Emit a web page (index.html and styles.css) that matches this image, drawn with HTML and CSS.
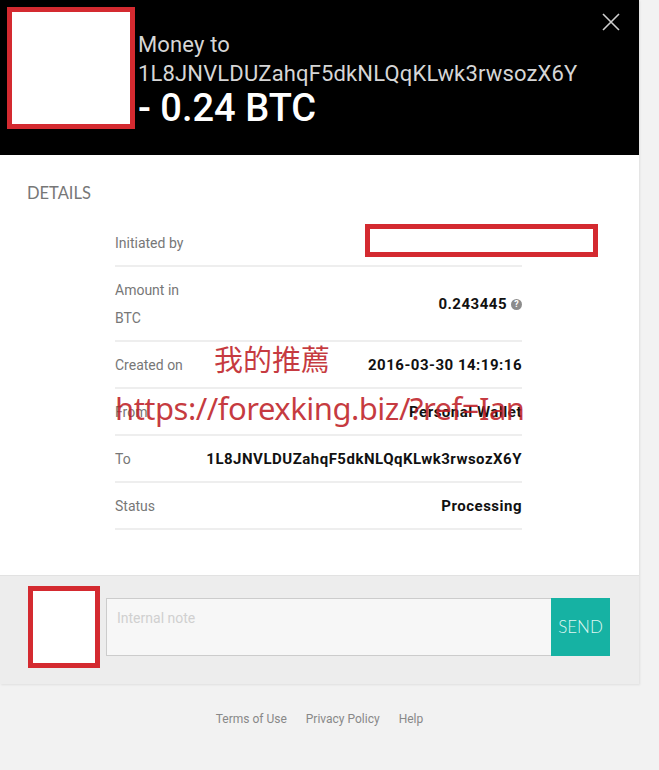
FILE: index.html
```html
<!DOCTYPE html>
<html>

<head lang="en">
    <meta charset="UTF-8">
    <title>Transaction details</title>
    <link rel="stylesheet" href="styles.css">
</head>

<body>
    <div class="modal">
        <div class="modal-head">
            <div class="avatar"></div>
            <div class="title">
                <div class="title-sub">Money to</div>
                <div class="title-sub">1L8JNVLDUZahqF5dkNLQqKLwk3rwsozX6Y</div>
                <div class="title-amount">- 0.24 BTC</div>
            </div>
            <a href="#" class="close">
                <svg width="18" height="18" viewBox="0 0 18 18">
                    <path d="M1 1 L17 17 M17 1 L1 17" stroke="#cfcfcf" stroke-width="1.6" fill="none"/>
                </svg>
            </a>
        </div>

        <div class="modal-body">
            <h3 class="section-title">DETAILS</h3>
            <div class="details">
                <div class="row">
                    <span class="label">Initiated by</span>
                    <span class="value"></span>
                </div>
                <div class="row">
                    <span class="label">Amount in BTC</span>
                    <span class="value">0.243445<i class="help">?</i></span>
                </div>
                <div class="row">
                    <span class="label">Created on</span>
                    <span class="value">2016-03-30 14:19:16</span>
                </div>
                <div class="row">
                    <span class="label">From</span>
                    <span class="value">Personal Wallet</span>
                </div>
                <div class="row">
                    <span class="label">To</span>
                    <span class="value">1L8JNVLDUZahqF5dkNLQqKLwk3rwsozX6Y</span>
                </div>
                <div class="row">
                    <span class="label">Status</span>
                    <span class="value">Processing</span>
                </div>

                <!-- 标注层 -->
                <div class="mark mark-initiator"></div>
                <div class="watermark wm-cn">我的推薦</div>
                <div class="watermark wm-url">https://forexking.biz/?ref=Ian</div>
            </div>
        </div>

        <div class="note-bar">
            <div class="note-avatar"></div>
            <textarea class="note-input" placeholder="Internal note"></textarea>
            <button class="send">SEND</button>
        </div>
    </div>

    <div class="footer">
        <a href="#">Terms of Use</a>
        <a href="#">Privacy Policy</a>
        <a href="#">Help</a>
    </div>
</body>

</html>
```

FILE: styles.css
```css
* {
    margin: 0;
    padding: 0;
    box-sizing: border-box;
}

body {
    background-color: #f2f2f2;
    font-family: Roboto, "Liberation Sans", sans-serif;
}

.modal {
    width: 639px;
    background: #fff;
    box-shadow: 1px 1px 2px rgba(0, 0, 0, .08);
}

/* 头部 */
.modal-head {
    position: relative;
    height: 155px;
    background: #000;
    padding: 7px;
    display: flex;
    align-items: flex-start;
}

.avatar {
    width: 128px;
    height: 122px;
    background: #fff;
    border: 5px solid #d42a30;
    flex-shrink: 0;
}

.title {
    margin-left: 3px;
    margin-top: 23px;
}

.title-sub {
    color: #d6d6d6;
    font-size: 22px;
    line-height: 29px;
    letter-spacing: 0.15px;
}

.title-amount {
    color: #fff;
    font-size: 38px;
    font-weight: 500;
    line-height: 41px;
}

.close {
    position: absolute;
    top: 13px;
    right: 19px;
}

/* 详情 */
.modal-body {
    padding: 28px 0 45px;
}

.section-title {
    margin-left: 27px;
    font-family: Lato, sans-serif;
    font-size: 16.5px;
    font-weight: normal;
    line-height: 20px;
    color: #777;
}

.details {
    position: relative;
    width: 407px;
    margin: 17px 0 0 115px;
}

.row {
    display: flex;
    justify-content: space-between;
    align-items: center;
    padding: 9px 0 8px;
    border-bottom: 2px solid #eee;
}

.label {
    width: 80px;
    font-size: 14px;
    line-height: 28px;
    color: #777;
}

.value {
    font-size: 15px;
    font-weight: bold;
    color: #111;
    letter-spacing: 0.5px;
    display: flex;
    align-items: center;
}

.help {
    display: inline-block;
    width: 11px;
    height: 11px;
    margin-left: 4px;
    border-radius: 50%;
    background: #8c8c8c;
    color: #fff;
    font-size: 9px;
    font-style: normal;
    line-height: 11px;
    text-align: center;
    letter-spacing: 0;
}

.mark {
    position: absolute;
    background: #fff;
    border: 5px solid #d42a30;
}

.mark-initiator {
    left: 250px;
    top: 4px;
    width: 233px;
    height: 33px;
}

.watermark {
    position: absolute;
    color: rgba(190, 30, 38, .88);
    white-space: nowrap;
}

.wm-cn {
    left: 99px;
    top: 120px;
    font-family: "Noto Sans CJK TC", sans-serif;
    font-size: 29px;
    line-height: 36px;
}

.wm-url {
    left: 0;
    top: 168px;
    font-family: "Noto Sans", sans-serif;
    font-size: 31px;
    line-height: 40px;
    letter-spacing: -0.5px;
}

/* 备注栏 */
.note-bar {
    display: flex;
    align-items: center;
    height: 109px;
    padding: 0 29px 7px 28px;
    background: #ededed;
    border-top: 1px solid #e2e2e2;
}

.note-avatar {
    width: 72px;
    height: 82px;
    background: #fff;
    border: 5px solid #d42a30;
    flex-shrink: 0;
}

.note-input {
    flex: 1;
    height: 58px;
    margin-left: 6px;
    padding: 11px 10px;
    background: #f7f7f7;
    border: 1px solid #ccc;
    border-right: none;
    font-family: Roboto, sans-serif;
    font-size: 14px;
    resize: none;
    outline: none;
}

.note-input::placeholder {
    color: #d0d0d0;
}

.send {
    width: 59px;
    height: 58px;
    background: #16b2a3;
    border: none;
    color: #dff6f2;
    font-family: Lato, sans-serif;
    font-size: 17px;
    font-weight: 300;
}

/* 页脚 */
.footer {
    display: flex;
    justify-content: center;
    gap: 19px;
    width: 639px;
    padding-top: 27px;
}

.footer a {
    color: #888;
    font-size: 12px;
    line-height: 16px;
    text-decoration: none;
}
```
